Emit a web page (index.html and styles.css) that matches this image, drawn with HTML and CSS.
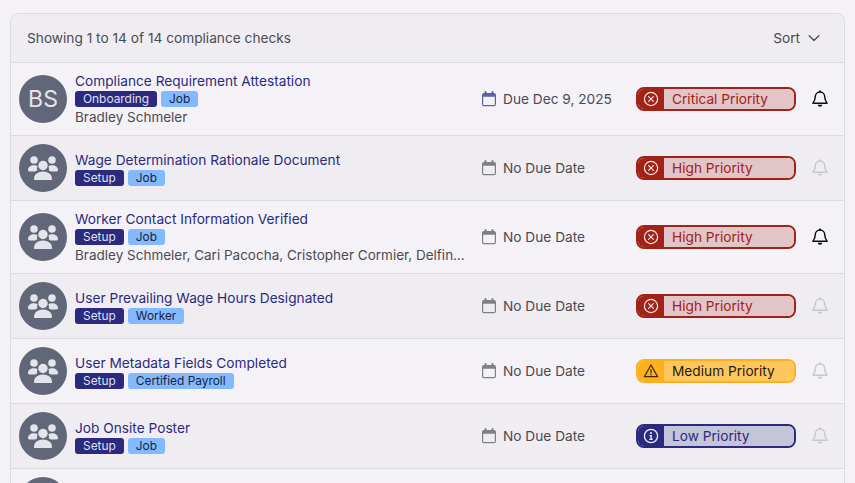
FILE: index.html
```html
<!DOCTYPE html>
<html lang="en">
<head>
  <meta charset="UTF-8">
  <meta name="viewport" content="width=device-width, initial-scale=1.0">
  <title>Compliance Checks</title>
  <link rel="stylesheet" href="styles.css">
</head>
<body>
  <svg class="sprites" aria-hidden="true">
    <symbol id="i-group" viewBox="0 0 32 32">
      <circle cx="7" cy="8" r="3.800"/>
      <circle cx="25" cy="8" r="3.800"/>
      <circle cx="16" cy="13.500" r="4.700"/>
      <path d="M1 17.800c0-2.700 2.700-4.500 6-4.500 1.400 0 2.700.3 3.700.9-.8 1.300-.9 2.700-.3 4-.8.300-1.400.7-2 1.200H2.200C1.500 19.400 1 18.800 1 17.800z"/>
      <path d="M31 17.800c0-2.700-2.700-4.500-6-4.500-1.400 0-2.700.3-3.700.9.800 1.300.9 2.700.3 4 .8.300 1.400.7 2 1.200h6.200c.7 0 1.200-.6 1.200-1.600z"/>
      <path d="M7 27c0-4.600 4-7.400 9-7.400s9 2.800 9 7.400c0 .6-.4 1-1 1H8c-.6 0-1-.4-1-1z"/>
    </symbol>
    <symbol id="i-cal" viewBox="0 0 16 16">
      <path fill="none" stroke="currentColor" stroke-width="2" stroke-linecap="round" d="M4.500 1v2M11.500 1v2"/>
      <rect x="1.600" y="2.600" width="12.800" height="12.100" rx="1.500" fill="none" stroke="currentColor" stroke-width="1.200"/>
      <path fill="currentColor" d="M1.600 4.100c0-.8.7-1.500 1.500-1.500h9.800c.8 0 1.500.7 1.500 1.500v1.700H1.600z"/>
    </symbol>
    <symbol id="i-bell" viewBox="0 0 16 16">
      <path fill="none" stroke="currentColor" stroke-width="1.300" stroke-linejoin="round" d="M8 1.800c-2.500 0-4.200 1.900-4.200 4.300 0 2.800-.8 4-2.100 5.600h12.600c-1.300-1.600-2.100-2.800-2.100-5.600 0-2.400-1.700-4.300-4.200-4.300z"/>
      <path fill="currentColor" d="M7.200.5h1.600v1.700H7.200zM6 13h4c0 1-.9 1.800-2 1.800S6 14 6 13z"/>
    </symbol>
    <symbol id="i-x" viewBox="0 0 16 16">
      <g fill="none" stroke="currentColor" stroke-width="1.200" stroke-linecap="round">
        <circle cx="8" cy="8" r="6.600"/>
        <path d="M5.600 5.600l4.800 4.800M10.400 5.600l-4.800 4.800"/>
      </g>
    </symbol>
    <symbol id="i-warn" viewBox="0 0 16 16">
      <path fill="none" stroke="currentColor" stroke-width="1.300" stroke-linejoin="round" d="M8 2L1.300 13.700h13.400z"/>
      <path fill="none" stroke="currentColor" stroke-width="1.300" d="M8 6.200v4"/>
      <circle cx="8" cy="11.800" r=".8" fill="currentColor"/>
    </symbol>
    <symbol id="i-info" viewBox="0 0 16 16">
      <circle cx="8" cy="8" r="6.600" fill="none" stroke="currentColor" stroke-width="1.300"/>
      <circle cx="8" cy="5" r="1" fill="currentColor"/>
      <path fill="currentColor" d="M6.600 7h2.200v3.800h.9V12H6.400v-1.200h1V8.200h-.8z"/>
    </symbol>
  </svg>

  <div class="card">
    <div class="list-head">
      <span>Showing 1 to 14 of 14 compliance checks</span>
      <button class="sort">Sort
        <svg width="16" height="16" viewBox="0 0 16 16" fill="none" stroke="currentColor" stroke-width="1.300" stroke-linecap="round" stroke-linejoin="round"><path d="M3.200 5.800L8 10.500l4.800-4.700"/></svg>
      </button>
    </div>

    <div class="row">
      <div class="avatar">BS</div>
      <div class="info">
        <a class="title">Compliance Requirement Attestation</a>
        <div class="tags"><span class="tag tag-dark">Onboarding</span><span class="tag tag-light">Job</span></div>
        <div class="people">Bradley Schmeler</div>
      </div>
      <div class="due due-set"><svg class="cal"><use href="#i-cal"/></svg><span>Due Dec 9, 2025</span></div>
      <div class="priority critical"><span class="p-icon"><svg><use href="#i-x"/></svg></span><span class="p-label">Critical Priority</span></div>
      <svg class="bell on"><use href="#i-bell"/></svg>
    </div>

    <div class="row alt">
      <div class="avatar"><svg class="group"><use href="#i-group"/></svg></div>
      <div class="info">
        <a class="title">Wage Determination Rationale Document</a>
        <div class="tags"><span class="tag tag-dark">Setup</span><span class="tag tag-light">Job</span></div>
      </div>
      <div class="due"><svg class="cal"><use href="#i-cal"/></svg><span>No Due Date</span></div>
      <div class="priority critical"><span class="p-icon"><svg><use href="#i-x"/></svg></span><span class="p-label">High Priority</span></div>
      <svg class="bell"><use href="#i-bell"/></svg>
    </div>

    <div class="row">
      <div class="avatar"><svg class="group"><use href="#i-group"/></svg></div>
      <div class="info">
        <a class="title">Worker Contact Information Verified</a>
        <div class="tags"><span class="tag tag-dark">Setup</span><span class="tag tag-light">Job</span></div>
        <div class="people">Bradley Schmeler, Cari Pacocha, Cristopher Cormier, Delfina Kuhn</div>
      </div>
      <div class="due"><svg class="cal"><use href="#i-cal"/></svg><span>No Due Date</span></div>
      <div class="priority critical"><span class="p-icon"><svg><use href="#i-x"/></svg></span><span class="p-label">High Priority</span></div>
      <svg class="bell on"><use href="#i-bell"/></svg>
    </div>

    <div class="row alt">
      <div class="avatar"><svg class="group"><use href="#i-group"/></svg></div>
      <div class="info">
        <a class="title">User Prevailing Wage Hours Designated</a>
        <div class="tags"><span class="tag tag-dark">Setup</span><span class="tag tag-light">Worker</span></div>
      </div>
      <div class="due"><svg class="cal"><use href="#i-cal"/></svg><span>No Due Date</span></div>
      <div class="priority critical"><span class="p-icon"><svg><use href="#i-x"/></svg></span><span class="p-label">High Priority</span></div>
      <svg class="bell"><use href="#i-bell"/></svg>
    </div>

    <div class="row">
      <div class="avatar"><svg class="group"><use href="#i-group"/></svg></div>
      <div class="info">
        <a class="title">User Metadata Fields Completed</a>
        <div class="tags"><span class="tag tag-dark">Setup</span><span class="tag tag-light">Certified Payroll</span></div>
      </div>
      <div class="due"><svg class="cal"><use href="#i-cal"/></svg><span>No Due Date</span></div>
      <div class="priority medium"><span class="p-icon"><svg><use href="#i-warn"/></svg></span><span class="p-label">Medium Priority</span></div>
      <svg class="bell"><use href="#i-bell"/></svg>
    </div>

    <div class="row alt">
      <div class="avatar"><svg class="group"><use href="#i-group"/></svg></div>
      <div class="info">
        <a class="title">Job Onsite Poster</a>
        <div class="tags"><span class="tag tag-dark">Setup</span><span class="tag tag-light">Job</span></div>
      </div>
      <div class="due"><svg class="cal"><use href="#i-cal"/></svg><span>No Due Date</span></div>
      <div class="priority low"><span class="p-icon"><svg><use href="#i-info"/></svg></span><span class="p-label">Low Priority</span></div>
      <svg class="bell"><use href="#i-bell"/></svg>
    </div>

    <div class="row">
      <div class="avatar"><svg class="group"><use href="#i-group"/></svg></div>
    </div>
  </div>
</body>
</html>
```

FILE: styles.css
```css
:root {
  --page: #f4f2f6;
  --alt: #efedf1;
  --line: #dcdbdf;
  --navy: #2b2a7e;
  --sky: #82b9ff;
  --slate: #616779;
  --text: #4b4b52;
}

* {
  margin: 0;
  padding: 0;
  box-sizing: border-box;
}

html, body {
  height: 483px;
  overflow: hidden;
}

body {
  font-family: Inter, "Noto Sans", sans-serif;
  font-size: 13.7px;
  line-height: 18px;
  background: var(--page);
  color: var(--text);
  padding: 13px 10px 0;
}

.sprites {
  display: none;
}

.card {
  width: 835px;
  border: 1px solid var(--line);
  border-radius: 8px;
  overflow: hidden;
}

.list-head {
  height: 49px;
  display: flex;
  align-items: center;
  justify-content: space-between;
  padding: 0 22px 0 16px;
  background: var(--alt);
  border-bottom: 1px solid var(--line);
}

.sort {
  display: flex;
  align-items: center;
  gap: 6px;
  border: none;
  background: none;
  color: var(--text);
  font: inherit;
}

.row {
  display: flex;
  align-items: center;
  padding: 8px 15px 8px 8px;
  border-bottom: 1px solid var(--line);
}

.alt {
  background: var(--alt);
}

.avatar {
  flex: none;
  width: 48px;
  height: 48px;
  border-radius: 50%;
  background: var(--slate);
  color: #e4e4ea;
  font-size: 23px;
  display: grid;
  place-items: center;
}

.group {
  width: 32px;
  height: 32px;
  fill: #e4e4ea;
}

.info {
  width: 392px;
  margin: 0 14px 0 8px;
  min-width: 0;
}

.title {
  display: block;
  color: var(--navy);
  line-height: 20px;
}

.tags {
  display: flex;
  gap: 4px;
}

.tag {
  height: 16px;
  padding: 0 8px;
  border-radius: 3px;
  font-size: 11.9px;
  line-height: 16px;
}

.tag-dark {
  background: var(--navy);
  color: #dfe0f0;
}

.tag-light {
  background: var(--sky);
  color: #1c1f3a;
}

.people {
  margin-top: 1px;
  font-size: 13.5px;
  white-space: nowrap;
  overflow: hidden;
  text-overflow: ellipsis;
  line-height: 19px;
}

.due {
  width: 155px;
  flex: none;
  display: flex;
  align-items: center;
  gap: 6px;
  color: var(--text);
}

.cal {
  width: 16px;
  height: 16px;
  flex: none;
  color: #807f85;
}

.due-set .cal {
  color: #5f5faa;
}

.priority {
  width: 160px;
  height: 24px;
  flex: none;
  display: flex;
  border: 2px solid;
  border-radius: 8px;
  overflow: hidden;
}

.p-icon {
  width: 28px;
  flex: none;
  display: grid;
  place-items: center;
  margin-left: -2px;
  padding-left: 2px;
  color: #f4e6e6;
}

.p-icon svg {
  width: 16px;
  height: 16px;
}

.p-label {
  flex: 1;
  padding-left: 8px;
  line-height: 20px;
}

.critical {
  border-color: #a12318;
}

.critical .p-icon {
  background: #a12318;
}

.critical .p-label {
  background: #e2c5c8;
  color: #a12318;
}

.medium {
  border-color: #feb11c;
}

.medium .p-icon {
  background: #feb11c;
  color: #3b2b0a;
}

.medium .p-label {
  background: #fec75d;
  color: #1f1b12;
}

.low {
  border-color: var(--navy);
}

.low .p-icon {
  background: var(--navy);
  color: #eeeef8;
}

.low .p-label {
  background: #c5c5d9;
  color: var(--navy);
}

.bell {
  width: 18px;
  height: 18px;
  flex: none;
  margin-left: 15px;
  color: #c8c8cc;
}

.bell.on {
  color: #0c0c10;
}
```
